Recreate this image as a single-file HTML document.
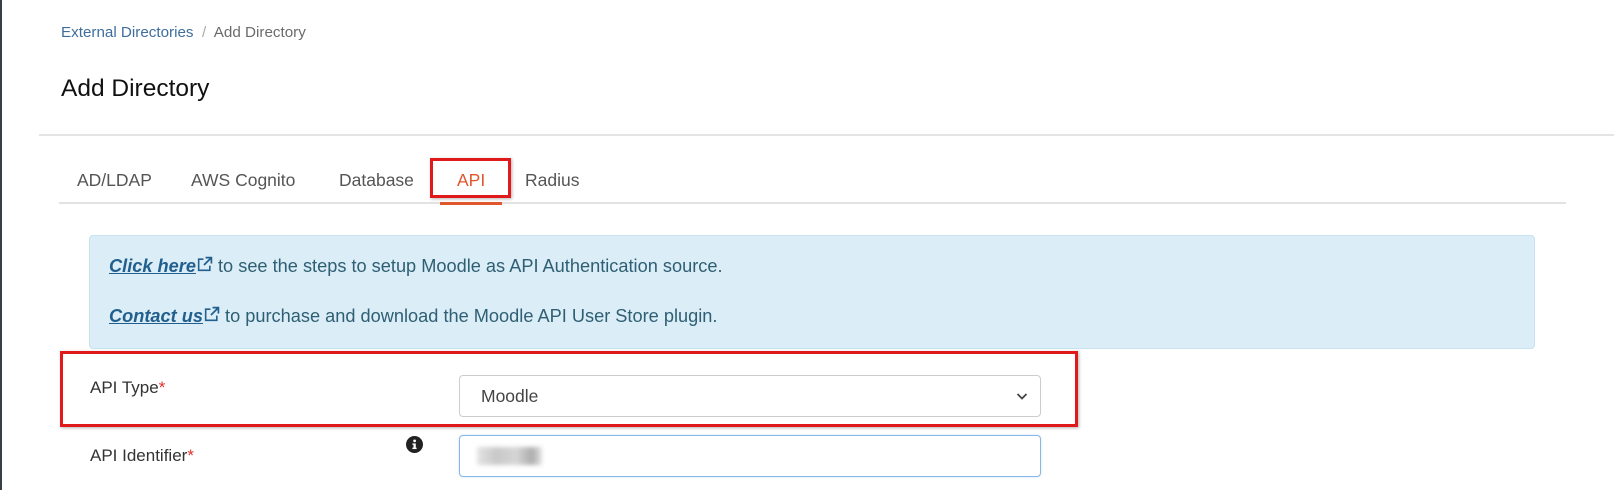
<!DOCTYPE html>
<html><head><meta charset="utf-8"><style>
*{box-sizing:border-box;margin:0;padding:0}
body{width:1614px;height:490px;background:#fff;font-family:"Liberation Sans",sans-serif;position:relative;overflow:hidden;color:#333}
.a{position:absolute;white-space:nowrap}
</style></head><body>
<div class="a" style="left:0;top:0;width:2px;height:490px;background:#3a3f47"></div>
<div class="a" style="left:61px;top:24px;font-size:15.2px;color:#3f6e9c">External Directories <span style="color:#aaa">&nbsp;/&nbsp;</span> <span style="color:#6b6b6b">Add Directory</span></div>
<div class="a" style="left:61px;top:75px;font-size:24.5px;color:#111">Add Directory</div>
<div class="a" style="left:39px;top:134px;width:1575px;height:2px;background:#e4e4e4"></div>
<div class="a" style="left:59px;top:202px;width:1507px;height:2px;background:#e2e2e2"></div>
<div class="a" style="left:77px;top:170px;font-size:17.5px;color:#555">AD/LDAP</div>
<div class="a" style="left:191px;top:170px;font-size:17.5px;color:#555">AWS Cognito</div>
<div class="a" style="left:339px;top:170px;font-size:17.5px;color:#555">Database</div>
<div class="a" style="left:457px;top:170px;font-size:17.5px;color:#e0562d">API</div>
<div class="a" style="left:525px;top:170px;font-size:17.5px;color:#555">Radius</div>
<div class="a" style="left:430px;top:158px;width:81px;height:40px;border:3px solid #e01a1a;box-shadow:1px 1px 3px rgba(0,0,0,.3)"></div>
<div class="a" style="left:440px;top:202px;width:62px;height:3px;background:#e0562d"></div>
<div class="a" style="left:89px;top:235px;width:1446px;height:114px;background:#dbedf6;border:1px solid #c6e3ef;border-radius:4px"></div>
<div class="a" style="left:109px;top:256px;font-size:18.2px;color:#2f5f74"><b style="font-style:italic;text-decoration:underline;color:#215f8e">Click here</b><svg width="17" height="17" viewBox="0 0 16 16" style="vertical-align:-1px"><path d="M7 3H2.5v10.5H13V9" fill="none" stroke="#215f8e" stroke-width="1.5"/><path d="M9 1.5h5.5V7M14.5 1.5L7.5 8.5" fill="none" stroke="#215f8e" stroke-width="1.6"/></svg> to see the steps to setup Moodle as API Authentication source.</div>
<div class="a" style="left:109px;top:306px;font-size:18.2px;color:#2f5f74"><b style="font-style:italic;text-decoration:underline;color:#215f8e">Contact us</b><svg width="17" height="17" viewBox="0 0 16 16" style="vertical-align:-1px"><path d="M7 3H2.5v10.5H13V9" fill="none" stroke="#215f8e" stroke-width="1.5"/><path d="M9 1.5h5.5V7M14.5 1.5L7.5 8.5" fill="none" stroke="#215f8e" stroke-width="1.6"/></svg> to purchase and download the Moodle API User Store plugin.</div>
<div class="a" style="left:90px;top:378px;font-size:17px;color:#333">API Type<span style="color:#e03030">*</span></div>
<div class="a" style="left:459px;top:375px;width:582px;height:42px;border:1px solid #ccc;border-radius:4px;font-size:17.5px;color:#444;padding:10px 0 0 21px">Moodle<svg class="a" style="right:12px;top:16px" width="12" height="9" viewBox="0 0 12 9"><path d="M1.5 2l4.5 4.5L10.5 2" fill="none" stroke="#444" stroke-width="1.8"/></svg></div>
<div class="a" style="left:60px;top:351px;width:1018px;height:76px;border:3px solid #e01a1a;box-shadow:1px 1px 3px rgba(0,0,0,.3)"></div>
<div class="a" style="left:90px;top:446px;font-size:17px;color:#333">API Identifier<span style="color:#e03030">*</span></div>
<svg class="a" style="left:406px;top:436px" width="17" height="17" viewBox="0 0 16 16"><circle cx="8" cy="8" r="8" fill="#222"/><rect x="7" y="7" width="2.2" height="5" fill="#fff"/><rect x="6" y="11" width="4" height="1.3" fill="#fff"/><rect x="6" y="7" width="2" height="1.2" fill="#fff"/><circle cx="8.1" cy="4.6" r="1.3" fill="#fff"/></svg>
<div class="a" style="left:459px;top:435px;width:582px;height:42px;border:1px solid #86b7e6;border-radius:4px;box-shadow:0 0 2px rgba(80,150,230,.3)"></div>
<div class="a" style="left:477px;top:447px;width:65px;height:18px;background:linear-gradient(90deg,#ddd,#bbb 30%,#ccc 60%,#999 85%,#ddd);filter:blur(2px);opacity:.8"></div>
</body></html>
